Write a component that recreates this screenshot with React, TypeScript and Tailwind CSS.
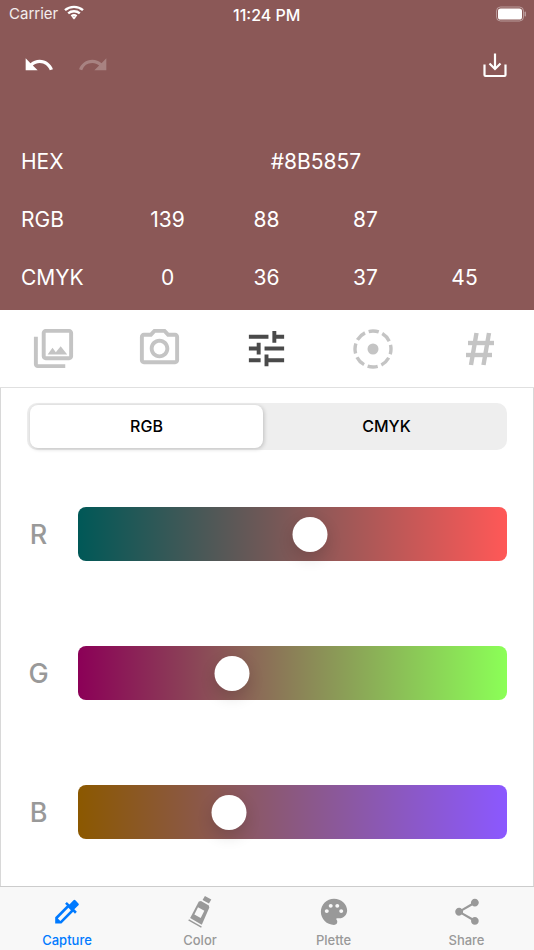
import { MdUndo, MdRedo, MdOutlinePhotoLibrary, MdOutlinePhotoCamera, MdTune, MdColorize, MdPalette, MdShare } from "react-icons/md";

const font = "[font-family:Inter,'Noto_Sans',sans-serif]";

const rows = [
  { label: "RGB", values: [139, 88, 87] },
  { label: "CMYK", values: [0, 36, 37, 45] },
];

const sliders = [
  { label: "R", left: 232, bar: "bg-[linear-gradient(to_right,#005857,#ff5857)]" },
  { label: "G", left: 154, bar: "bg-[linear-gradient(to_right,#8b0057,#8bff57)]" },
  { label: "B", left: 151, bar: "bg-[linear-gradient(to_right,#8b5800,#8b58ff)]" },
];

function Wifi() {
  return (
    <svg width="20" height="15" viewBox="0 0 20 15" fill="none" stroke="#fff" strokeWidth="2.4">
      <path d="M1 5.2C6 .8 14 .8 19 5.2" />
      <path d="M4.2 8.4C7.4 5.6 12.6 5.6 15.8 8.4" />
      <path d="M7.4 11.2C8.9 10.1 11.1 10.1 12.6 11.2" />
      <path d="M10 14.6l-2-2.2c1.2-.8 2.8-.8 4 0z" fill="#fff" stroke="none" />
    </svg>
  );
}

function Battery() {
  return (
    <svg width="30" height="16" viewBox="0 0 30 16">
      <rect x="0.5" y="1" width="27" height="14" rx="4" fill="none" stroke="#fff" strokeOpacity="0.4" />
      <rect x="2" y="2.5" width="24" height="11" rx="2.6" fill="#fff" />
      <rect x="28.5" y="5.5" width="1.5" height="5" rx="0.75" fill="#fff" fillOpacity="0.4" />
    </svg>
  );
}

function Download() {
  return (
    <svg width="26" height="26" viewBox="0 0 26 26" fill="none" stroke="#fff" strokeWidth="2.2">
      <path d="M13 1.5V17" />
      <path d="M7.5 11.5L13 17l5.5-5.5" />
      <path d="M2.5 12.5V23a1 1 0 0 0 1 1h19a1 1 0 0 0 1-1V12.5" />
    </svg>
  );
}

function TargetDashed() {
  return (
    <svg width="40" height="40" viewBox="0 0 40 40" fill="none">
      <circle cx="20" cy="20" r="18" stroke="#c4c4c4" strokeWidth="3.4" strokeDasharray="10.3 3.84" strokeDashoffset="5" />
      <circle cx="20" cy="20" r="5.5" fill="#c4c4c4" />
    </svg>
  );
}

function Hash() {
  return (
    <svg width="30" height="34" viewBox="0 0 30 34" fill="none" stroke="#c4c4c4" strokeWidth="4.4">
      <path d="M11.5 1L6 33" />
      <path d="M24 1L18.5 33" />
      <path d="M3 11H29" />
      <path d="M1 23H27" />
    </svg>
  );
}

function Tube() {
  return (
    <svg width="26" height="33" viewBox="0 0 26 33" fill="#999">
      <path d="M18 1l6.5 3.6-2.4 4L15.6 5z" />
      <path d="M14 6l8 4.6.4 2.4-7.6 17.2L3 23.4 11.8 6.6z" />
      <path d="M1.8 24.6l13 7.4-.7 1.2-13-7.4z" />
      <path d="M11 12.5l6.4 3.6-3.7 7.3-6.4-3.6z" fill="#f8f8f8" />
    </svg>
  );
}

function App() {
  return (
    <div className={`flex h-[950px] w-[534px] flex-col overflow-hidden bg-white antialiased ${font}`}>
      <div className="h-[310px] bg-[#8b5857] text-white">
        <div className="relative flex h-[28px] items-center justify-between pl-[9px] pr-[8px]">
          <div className="flex items-center gap-[6px] text-[15px] text-white/90">
            <span>Carrier</span>
            <div className="-mt-[4px]"><Wifi /></div>
          </div>
          <span className="absolute left-[233px] top-[3px] text-[16px] font-medium">11:24 PM</span>
          <Battery />
        </div>
        <div className="flex h-[74px] items-center justify-between pl-[23px] pr-[26px]">
          <div className="flex gap-[22px]">
            <MdUndo size={32} color="#fff" />
            <MdRedo size={32} color="#fff" className="opacity-25" />
          </div>
          <Download />
        </div>
        <div className="mt-[31px] flex h-[58px] items-center pl-[21px] text-[21px]">
          <span className="w-[97px]">HEX</span>
          <span className="w-[396px] text-center">#8B5857</span>
        </div>
        {rows.map((r) => (
          <div key={r.label} className="flex h-[58px] items-center pl-[21px] text-[21px]">
            <span className="w-[97px]">{r.label}</span>
            {r.values.map((v, i) => (
              <span key={i} className="w-[99px] text-center">{v}</span>
            ))}
          </div>
        ))}
      </div>

      <div className="flex h-[78px] items-center border-b border-[#e0e0e0] pr-[1px]">
        <div className="flex flex-1 justify-center"><MdOutlinePhotoLibrary size={47} color="#c4c4c4" /></div>
        <div className="flex flex-1 justify-center"><MdOutlinePhotoCamera size={47} color="#c4c4c4" /></div>
        <div className="flex flex-1 justify-center"><MdTune size={47} color="#4a4a4a" /></div>
        <div className="flex flex-1 justify-center"><TargetDashed /></div>
        <div className="flex flex-1 justify-center"><Hash /></div>
      </div>

      <div className="flex-1 border-x border-[#d8d8d8] px-[26px] pt-[15px]">
        <div className="flex h-[47px] w-[480px] rounded-[10px] bg-[#eeeeee] py-[2px] pl-[3px] pr-[2px] text-[16px] font-medium text-black">
          <div className="flex w-[233px] items-center justify-center rounded-[8px] bg-white pb-[1px] shadow-[1px_1px_4px_rgba(0,0,0,0.2)]">RGB</div>
          <div className="flex flex-1 items-center justify-center pb-[1px] pl-[5px]">CMYK</div>
        </div>
        <div className="mt-[57px] flex flex-col gap-[85px]">
          {sliders.map((s) => (
            <div key={s.label} className="flex items-center">
              <span className="mt-[3px] w-[51px] pr-[28px] text-center text-[27px] font-medium text-[#999999]">{s.label}</span>
              <div className={`relative h-[54px] w-[429px] rounded-[8px] ${s.bar}`}>
                <div
                  className="absolute top-[9.5px] h-[35px] w-[35px] -translate-x-1/2 rounded-full bg-white shadow-[0_6px_16px_rgba(0,0,0,0.14)]"
                  style={{ left: s.left }}
                />
              </div>
            </div>
          ))}
        </div>
      </div>

      <div className="flex h-[64px] border-t border-[#cccccc] bg-[#f8f8f8] pl-[1px] text-[13px] font-medium text-[#999999]">
        <div className="flex w-[132px] flex-col items-center pt-[9px] text-[#007aff]">
          <MdColorize size={32} className="h-[32px]" />
          <span className="mt-[3px]">Capture</span>
        </div>
        <div className="flex w-[134px] flex-col items-center pt-[8px]">
          <Tube />
          <span className="mt-[3px]">Color</span>
        </div>
        <div className="flex w-[133px] flex-col items-center pt-[9px]">
          <MdPalette size={32} />
          <span className="mt-[3px]">Plette</span>
        </div>
        <div className="flex w-[133px] flex-col items-center pt-[9px]">
          <MdShare size={32} />
          <span className="mt-[3px]">Share</span>
        </div>
      </div>
    </div>
  );
}

export default App;
